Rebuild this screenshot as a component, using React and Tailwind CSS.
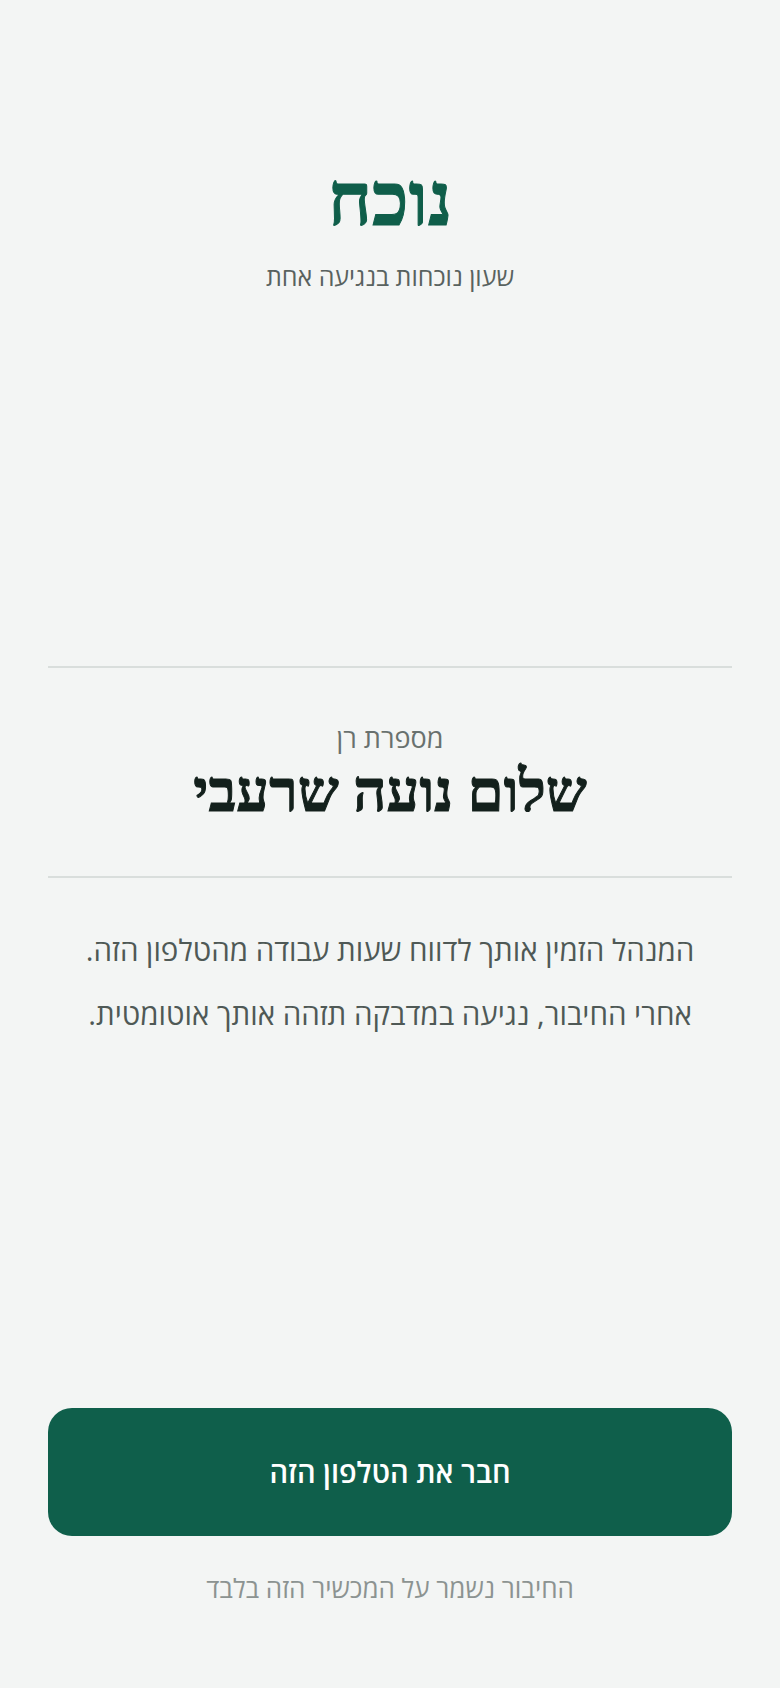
import React from "react";

function App() {
  return (
    <div
      dir="rtl"
      className="min-h-screen w-full bg-[#f3f5f4] flex flex-col px-12 font-['Open_Sans','Liberation_Sans',sans-serif]"
    >
      {/* brand */}
      <header className="pt-[162px] text-center">
        <h1 className="font-['Liberation_Serif',serif] font-bold text-[75px] leading-none text-[#0f5e4a] [-webkit-text-stroke:1px_#0f5e4a]">
          נוכח
        </h1>
        <p className="mt-[27px] text-[25px] leading-none text-[#59625f]">
          שעון נוכחות בנגיעה אחת
        </p>
      </header>

      {/* employee */}
      <section className="mt-[377px] border-y-2 border-[#d9dedc] pt-[56px] pb-[55px] text-center">
        <p className="text-[27px] leading-none text-[#69716e]">מספרת רן</p>
        <h2 className="mt-[12px] font-['Liberation_Serif',serif] font-bold text-[58px] leading-none text-[#13201c] [-webkit-text-stroke:1px_#13201c]">
          שלום נועה שרעבי
        </h2>
      </section>

      <div className="mt-[52px] flex flex-col gap-[24px] text-center text-[29.5px] leading-[40px] text-[#4f5956]">
        <p>המנהל הזמין אותך לדווח שעות עבודה מהטלפון הזה.</p>
        <p>אחרי החיבור, נגיעה במדבקה תזהה אותך אוטומטית.</p>
      </div>

      <div className="flex-1" />

      <button
        type="button"
        className="h-[128px] w-full rounded-3xl bg-[#0f5f4b] text-[29px] font-semibold text-white"
      >
        חבר את הטלפון הזה
      </button>
      <p className="mt-[39px] mb-[87px] text-center text-[26px] leading-none text-[#8c9391]">
        החיבור נשמר על המכשיר הזה בלבד
      </p>
    </div>
  );
}

export default App;
